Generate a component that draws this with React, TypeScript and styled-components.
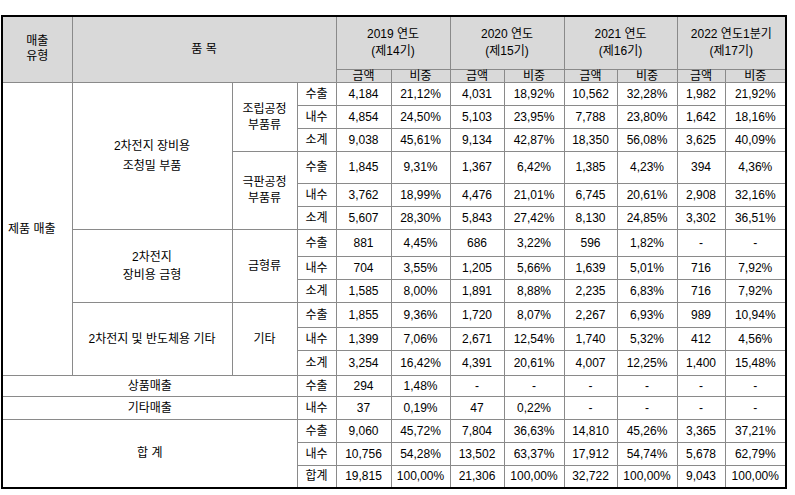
import React from "react";
import styled, { createGlobalStyle } from "styled-components";

const Global = createGlobalStyle`
  html, body { margin: 0; padding: 0; background: #fff; }
  body { font-family: "Liberation Sans", "Noto Sans CJK KR", sans-serif; color: #000; }
`;

const Page = styled.div`
  padding: 15px 0 0 1px;
`;

const Table = styled.table`
  border-collapse: collapse;
  table-layout: fixed;
  width: 785px;
  border: 2px solid #000;
  font-size: 12px;
  font-family: "Liberation Sans", "Noto Sans CJK KR", sans-serif;
  color: #000;
`;

const Row = styled.tr<{ $h: number }>`
  height: ${(p) => p.$h}px;
`;

const Cell = styled.td<{ $lh?: number; $left?: boolean }>`
  border: 1px solid #8a8a8a;
  padding: 0;
  padding-left: ${(p) => (p.$left ? "5px" : "0")};
  text-align: ${(p) => (p.$left ? "left" : "center")};
  vertical-align: middle;
  line-height: ${(p) => p.$lh ?? 14}px;
  white-space: nowrap;
  overflow: hidden;
`;

const Head = styled.th<{ $lh?: number }>`
  border: 1px solid #8a8a8a;
  background: #d9d9d9;
  padding: 0;
  font-weight: normal;
  text-align: center;
  vertical-align: middle;
  line-height: ${(p) => p.$lh ?? 12}px;
  white-space: nowrap;
`;

const widths = [70, 160, 65, 39, 55, 59, 54, 60, 53, 60, 48, 61];

type Line = [string, string[]];

const years = [
  ["2019 연도", "(제14기)"],
  ["2020 연도", "(제15기)"],
  ["2021 연도", "(제16기)"],
  ["2022 연도1분기", "(제17기)"],
];

const g1a: Line[] = [
  ["수출", ["4,184", "21,12%", "4,031", "18,92%", "10,562", "32,28%", "1,982", "21,92%"]],
  ["내수", ["4,854", "24,50%", "5,103", "23,95%", "7,788", "23,80%", "1,642", "18,16%"]],
  ["소계", ["9,038", "45,61%", "9,134", "42,87%", "18,350", "56,08%", "3,625", "40,09%"]],
];
const g1b: Line[] = [
  ["수출", ["1,845", "9,31%", "1,367", "6,42%", "1,385", "4,23%", "394", "4,36%"]],
  ["내수", ["3,762", "18,99%", "4,476", "21,01%", "6,745", "20,61%", "2,908", "32,16%"]],
  ["소계", ["5,607", "28,30%", "5,843", "27,42%", "8,130", "24,85%", "3,302", "36,51%"]],
];
const g2: Line[] = [
  ["수출", ["881", "4,45%", "686", "3,22%", "596", "1,82%", "-", "-"]],
  ["내수", ["704", "3,55%", "1,205", "5,66%", "1,639", "5,01%", "716", "7,92%"]],
  ["소계", ["1,585", "8,00%", "1,891", "8,88%", "2,235", "6,83%", "716", "7,92%"]],
];
const g3: Line[] = [
  ["수출", ["1,855", "9,36%", "1,720", "8,07%", "2,267", "6,93%", "989", "10,94%"]],
  ["내수", ["1,399", "7,06%", "2,671", "12,54%", "1,740", "5,32%", "412", "4,56%"]],
  ["소계", ["3,254", "16,42%", "4,391", "20,61%", "4,007", "12,25%", "1,400", "15,48%"]],
];
const goods: Line = ["수출", ["294", "1,48%", "-", "-", "-", "-", "-", "-"]];
const other: Line = ["내수", ["37", "0,19%", "47", "0,22%", "-", "-", "-", "-"]];
const total: Line[] = [
  ["수출", ["9,060", "45,72%", "7,804", "36,63%", "14,810", "45,26%", "3,365", "37,21%"]],
  ["내수", ["10,756", "54,28%", "13,502", "63,37%", "17,912", "54,74%", "5,678", "62,79%"]],
  ["합계", ["19,815", "100,00%", "21,306", "100,00%", "32,722", "100,00%", "9,043", "100,00%"]],
];

const Values: React.FC<{ line: Line }> = ({ line }) => (
  <>
    <Cell>{line[0]}</Cell>
    {line[1].map((v, i) => (
      <Cell key={i}>{v}</Cell>
    ))}
  </>
);

export default function App() {
  return (
    <Page>
      <Global />
      <Table>
        <colgroup>
          {widths.map((w, i) => (
            <col key={i} style={{ width: w }} />
          ))}
        </colgroup>
        <thead>
          <Row $h={53}>
            <Head rowSpan={2} $lh={15}>
              매출
              <br />
              유형
            </Head>
            <Head rowSpan={2} colSpan={3}>
              품 목
            </Head>
            {years.map((y) => (
              <Head key={y[0]} colSpan={2} $lh={17}>
                {y[0]}
                <br />
                {y[1]}
              </Head>
            ))}
          </Row>
          <Row $h={13}>
            {years.map((y) => (
              <React.Fragment key={y[0]}>
                <Head>금액</Head>
                <Head>비중</Head>
              </React.Fragment>
            ))}
          </Row>
        </thead>
        <tbody>
          <Row $h={23}>
            <Cell rowSpan={12} $left>
              제품 매출
            </Cell>
            <Cell rowSpan={6} $lh={20}>
              2차전지 장비용
              <br />
              조청밀 부품
            </Cell>
            <Cell rowSpan={3} $lh={16}>
              조립공정
              <br />
              부품류
            </Cell>
            <Values line={g1a[0]} />
          </Row>
          <Row $h={23}>
            <Values line={g1a[1]} />
          </Row>
          <Row $h={23}>
            <Values line={g1a[2]} />
          </Row>
          <Row $h={32}>
            <Cell rowSpan={3} $lh={16}>
              극판공정
              <br />
              부품류
            </Cell>
            <Values line={g1b[0]} />
          </Row>
          <Row $h={23}>
            <Values line={g1b[1]} />
          </Row>
          <Row $h={23}>
            <Values line={g1b[2]} />
          </Row>
          <Row $h={27}>
            <Cell rowSpan={3} $lh={18}>
              2차전지
              <br />
              장비용 금형
            </Cell>
            <Cell rowSpan={3}>금형류</Cell>
            <Values line={g2[0]} />
          </Row>
          <Row $h={23}>
            <Values line={g2[1]} />
          </Row>
          <Row $h={23}>
            <Values line={g2[2]} />
          </Row>
          <Row $h={25}>
            <Cell rowSpan={3}>2차전지 및 반도체용 기타</Cell>
            <Cell rowSpan={3}>기타</Cell>
            <Values line={g3[0]} />
          </Row>
          <Row $h={23}>
            <Values line={g3[1]} />
          </Row>
          <Row $h={25}>
            <Values line={g3[2]} />
          </Row>
          <Row $h={21}>
            <Cell colSpan={3}>상품매출</Cell>
            <Values line={goods} />
          </Row>
          <Row $h={23}>
            <Cell colSpan={3}>기타매출</Cell>
            <Values line={other} />
          </Row>
          <Row $h={23}>
            <Cell rowSpan={3} colSpan={3}>
              합 계
            </Cell>
            <Values line={total[0]} />
          </Row>
          <Row $h={23}>
            <Values line={total[1]} />
          </Row>
          <Row $h={23}>
            <Values line={total[2]} />
          </Row>
        </tbody>
      </Table>
    </Page>
  );
}
